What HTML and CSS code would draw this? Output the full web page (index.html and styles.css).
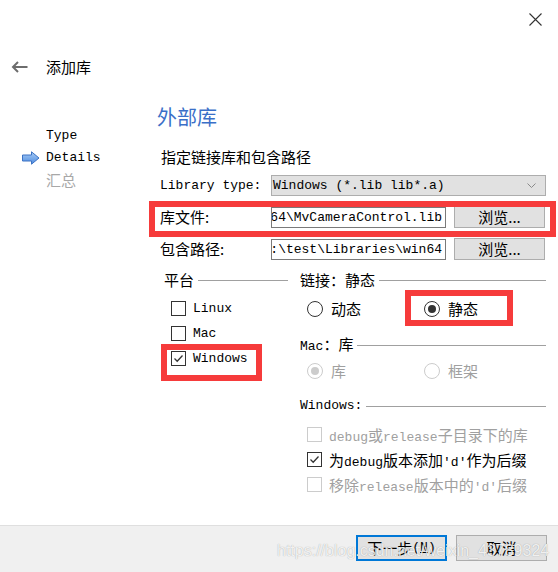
FILE: index.html
```html
<!DOCTYPE html>
<html lang="zh-CN">
<head>
<meta charset="utf-8">
<title>添加库</title>
<link rel="stylesheet" href="styles.css">
</head>
<body>
<div class="win">
  <div class="top">
    <svg class="close" width="13" height="13" viewBox="0 0 13 13"><path d="M0.5 0.5 L12.5 12.5 M12.5 0.5 L0.5 12.5" stroke="#333" stroke-width="1.1" fill="none"/></svg>
  </div>
  <div class="head">
    <svg class="back" width="17" height="12" viewBox="0 0 17 12"><path d="M16.5 6 H2 M7 1 L2 6 L7 11" stroke="#6d6d6d" stroke-width="2" fill="none"/></svg>
    <span class="htitle">添加库</span>
  </div>
  <div class="main">
    <nav class="side">
      <div class="nav-item"><span class="m">Type</span></div>
      <div class="nav-item">
        <svg class="cur-arrow" width="18" height="14" viewBox="0 0 18 14">
          <defs><linearGradient id="ag" x1="0" y1="0" x2="0" y2="1"><stop offset="0" stop-color="#a9cdf5"/><stop offset="1" stop-color="#4d8be0"/></linearGradient></defs>
          <path d="M0.5 4 H9.5 V0.8 L17 7 L9.5 13.2 V10 H0.5 Z" fill="url(#ag)" stroke="#3c73c4" stroke-width="1"/>
        </svg>
        <span class="m">Details</span>
      </div>
      <div class="nav-item dim">汇总</div>
    </nav>
    <section class="content">
      <h1 class="title">外部库</h1>
      <p class="desc">指定链接库和包含路径</p>
      <div class="form">
        <div class="row">
          <span class="lbl m">Library type:</span>
          <div class="combo"><span class="m">Windows (*.lib lib*.a)</span>
            <svg class="chev" width="9" height="5" viewBox="0 0 9 5"><path d="M0.5 0.5 L4.5 4.5 L8.5 0.5" stroke="#8a8a8a" fill="none"/></svg>
          </div>
        </div>
        <div class="row">
          <span class="lbl">库文件:</span>
          <div class="field"><span class="m">E:\test\Libraries\win64\MvCameraControl.lib</span></div>
          <span class="btn">浏览...</span>
        </div>
        <div class="row">
          <span class="lbl">包含路径:</span>
          <div class="field"><span class="m">E:\test\Libraries\win64</span></div>
          <span class="btn">浏览...</span>
        </div>
      </div>
      <div class="groups">
        <div class="col left">
          <div class="gtitle"><span>平台</span><i class="rule"></i></div>
          <div class="opt first"><span class="cb"></span><span class="m">Linux</span></div>
          <div class="opt"><span class="cb"></span><span class="m">Mac</span></div>
          <div class="opt"><span class="cb on"><svg width="13" height="13" viewBox="0 0 13 13"><path d="M2.5 6.5 L5.2 9.2 L10.5 3.5" stroke="#333" stroke-width="1.3" fill="none"/></svg></span><span class="m">Windows</span></div>
        </div>
        <div class="col right">
          <div class="gtitle"><span>链接：静态</span><i class="rule"></i></div>
          <div class="radios first">
            <div class="ropt"><span class="rb"></span><span>动态</span></div>
            <div class="ropt"><span class="rb sel"></span><span>静态</span></div>
          </div>
          <div class="gtitle mt14"><span><span class="m">Mac</span>：库</span><i class="rule"></i></div>
          <div class="radios dis">
            <div class="ropt"><span class="rb sel"></span><span>库</span></div>
            <div class="ropt"><span class="rb"></span><span>框架</span></div>
          </div>
          <div class="gtitle mt13"><span class="m">Windows:</span><i class="rule"></i></div>
          <div class="opt wfirst dis"><span class="cb"></span><span><span class="m">debug</span>或<span class="m">release</span>子目录下的库</span></div>
          <div class="opt"><span class="cb on"><svg width="13" height="13" viewBox="0 0 13 13"><path d="M2.5 6.5 L5.2 9.2 L10.5 3.5" stroke="#333" stroke-width="1.3" fill="none"/></svg></span><span>为<span class="m">debug</span>版本添加<span class="m">'d'</span>作为后缀</span></div>
          <div class="opt dis"><span class="cb"></span><span>移除<span class="m">release</span>版本中的<span class="m">'d'</span>后缀</span></div>
        </div>
      </div>
    </section>
  </div>
  <footer class="foot">
    <span class="btn big primary">下一步<span class="m">(<u>N</u>)</span></span>
    <span class="btn big">取消</span>
  </footer>
  <div class="mark mark-file"></div>
  <div class="mark mark-win"></div>
  <div class="mark mark-static"></div>
  <div class="wm">https://blog.csdn.net/weixin_43789324</div>
</div>
</body>
</html>
```

FILE: styles.css
```css
* { box-sizing: border-box; }
html, body { margin: 0; padding: 0; background: #fff; }
body {
  font-family: "Noto Sans CJK SC", "Liberation Sans", sans-serif;
  font-size: 15px;
  color: #000;
}
.m {
  font-family: "Liberation Mono", "Noto Sans CJK SC", monospace;
  font-size: 13px;
}
.win {
  position: relative;
  width: 558px;
  height: 572px;
  display: flex;
  flex-direction: column;
  overflow: hidden;
}
.top {
  height: 50px;
  display: flex;
  justify-content: flex-end;
  padding: 13px 16px 0 0;
}
.close { display: block; }
.head {
  height: 34px;
  display: flex;
  align-items: center;
  padding-left: 11px;
}
.back { display: block; }
.htitle { margin-left: 18px; line-height: 20px; }
.main {
  flex: 1;
  display: flex;
  padding-top: 20px;
}
.side {
  width: 157px;
  padding-top: 21px;
}
.nav-item {
  height: 22px;
  line-height: 22px;
  display: flex;
  align-items: center;
  padding-left: 46px;
  position: relative;
}
.cur-arrow { position: absolute; left: 22px; top: 4px; }
.nav-item.dim { color: #a8a8a8; }
.content { flex: 1; }
.title {
  margin: 0;
  font-weight: 400;
  font-size: 20px;
  line-height: 26px;
  height: 26px;
  color: #3a6fc8;
}
.desc {
  margin: 16px 0 0 0;
  padding-left: 4px;
  line-height: 22px;
  height: 22px;
}
.form { padding-left: 3px; margin-top: 7px; }
.row {
  display: flex;
  align-items: center;
  height: 22px;
  margin-bottom: 10px;
}
.row:first-child { height: 21px; margin-bottom: 10px; }
.lbl { width: 111px; line-height: 20px; }
.combo {
  width: 275px;
  height: 21px;
  background: #e1e1e1;
  border: 1px solid #adadad;
  display: flex;
  align-items: center;
  justify-content: space-between;
  padding: 0 9px 0 1px;
  line-height: 19px;
}
.chev { display: block; }
.field {
  width: 175px;
  height: 21px;
  border: 1px solid #7a7a7a;
  background: #fff;
  display: flex;
  justify-content: flex-end;
  align-items: center;
  overflow: hidden;
  white-space: nowrap;
  padding-right: 3px;
  line-height: 19px;
}
.field .m { flex: none; }
.btn {
  width: 91px;
  height: 22px;
  margin-left: 8px;
  background: #e1e1e1;
  border: 1px solid #adadad;
  display: flex;
  align-items: center;
  justify-content: center;
  line-height: 20px;
}
.groups {
  display: flex;
  margin-top: 0;
  padding-left: 7px;
  gap: 12px;
}
.col.left { width: 124px; }
.col.right { width: 246px; }
.gtitle {
  display: flex;
  align-items: center;
  height: 20px;
  line-height: 20px;
  white-space: nowrap;
}
.rule {
  flex: 1;
  height: 1px;
  background: #a0a0a0;
  margin-left: 4px;
}
.mt14 { margin-top: 14px; }
.mt13 { margin-top: 13px; }
.opt {
  height: 25px;
  display: flex;
  align-items: center;
  padding-left: 7px;
  gap: 7px;
  white-space: nowrap;
}
.opt.first { margin-top: 6px; }
.opt.wfirst { margin-top: 6px; }
.cb {
  width: 15px;
  height: 15px;
  border: 1px solid #333;
  background: #fff;
  display: flex;
  align-items: center;
  justify-content: center;
  flex: none;
}
.cb svg { display: block; }
.dis { color: #a0a0a0; }
.dis .cb { border-color: #cccccc; }
.radios {
  display: flex;
  height: 25px;
  align-items: center;
  padding-left: 7px;
}
.radios.first { margin-top: 6px; }
.radios.dis { margin-top: 3px; }
.ropt {
  width: 117px;
  display: flex;
  align-items: center;
  gap: 8px;
}
.rb {
  width: 16px;
  height: 16px;
  border-radius: 50%;
  border: 1px solid #333;
  background: #fff;
  display: flex;
  align-items: center;
  justify-content: center;
  flex: none;
}
.rb.sel::after {
  content: "";
  width: 8px;
  height: 8px;
  border-radius: 50%;
  background: #333;
}
.dis .rb { border-color: #cccccc; }
.dis .rb.sel::after { background: #cccccc; }
.foot {
  height: 47px;
  flex: none;
  background: #f0f0f0;
  border-top: 1px solid #dfdfdf;
  display: flex;
  justify-content: flex-end;
  padding: 9px 11px 0 0;
  gap: 9px;
}
.btn.big {
  height: 26px;
  width: 91px;
  margin-left: 0;
}
.btn.primary { border: 2px solid #0078d7; }
.mark {
  position: absolute;
  border: 6px solid #f63b3b;
}
.mark-file { left: 149px; top: 201px; width: 407px; height: 36px; }
.mark-win { left: 161px; top: 344px; width: 101px; height: 37px; }
.mark-static { left: 405px; top: 290px; width: 108px; height: 36px; }
.wm {
  position: absolute;
  left: 277px;
  top: 541px;
  font-family: "Liberation Sans", sans-serif;
  font-size: 16px;
  line-height: 20px;
  color: rgba(255, 255, 255, 0.85);
  text-shadow: 0 0 1px rgba(0, 0, 0, 0.35);
  white-space: nowrap;
}
```
